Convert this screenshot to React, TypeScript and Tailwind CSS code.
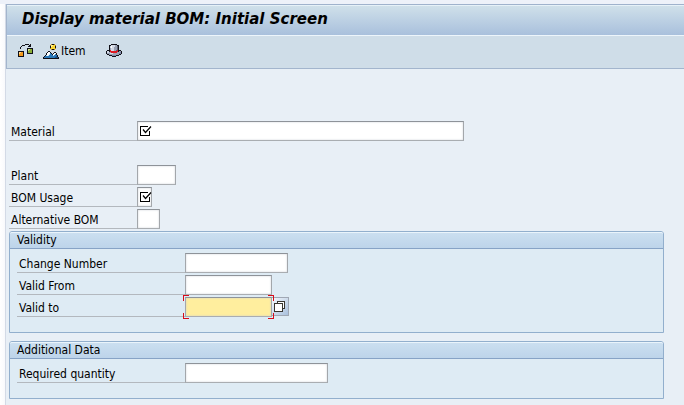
import type { ReactNode } from "react";

const PALETTE: Record<string, string> = {
  k: "#101018",
  o: "#f39a1c",
  O: "#ffd58a",
  g: "#8cae36",
  G: "#d0e08a",
  y: "#fbd834",
  Y: "#fff3a0",
  n: "#b08a20",
  w: "#ffffff",
  b: "#2a78b8",
  B: "#174f8c",
  l: "#c6e2f4",
  r: "#e01820",
  s: "#9aa2b4",
  S: "#d4dae6",
  d: "#5c6274",
  p: "#8088a8",
};

function PixelIcon({ rows }: { rows: string[] }) {
  const width = Math.max(...rows.map((row) => row.length));
  return (
    <svg
      width={width}
      height={rows.length}
      viewBox={`0 0 ${width} ${rows.length}`}
      shapeRendering="crispEdges"
      aria-hidden="true"
      className="shrink-0"
    >
      {rows.flatMap((row, y) =>
        [...row].map((c, x) =>
          c === "." ? null : <rect key={`${x}-${y}`} x={x} y={y} width="1" height="1" fill={PALETTE[c]} />,
        ),
      )}
    </svg>
  );
}

const STRUCTURE = [
  ".......kkkk.k...",
  "....kkk....kk...",
  "...k......kkk...",
  "..k.............",
  "..k......kkkkkk.",
  ".........kGGggk.",
  ".........kGgggk.",
  "kkkkkk...kggggk.",
  "kOOook...kggggk.",
  "kOoook...kkkkkk.",
  "kooook..........",
  "kooook..........",
  "kkkkkk..........",
  "................",
];

const MOUNTAIN = [
  "........nkkn....",
  ".......nYYyyn...",
  ".......kYyyyk...",
  ".......kyyyyk...",
  ".......nyyyyn...",
  "........nkkn....",
  "................",
  ".....kk.........",
  "....kwwk...kk...",
  "...kwwwbk.kwwk..",
  "...kwwlbbkwwbk..",
  "..klwlbbbblbbbk.",
  ".kbbbbbbbbbbbBk.",
  "kbbbbbbbbbbbBBBk",
  "kkkkkkkkkkkkkkkk",
];

const HAT = [
  ".....kkkkkk.....",
  "...kkSSSSsskk...",
  "...kSwSSSssdk...",
  "...kSwSSsssdk...",
  "...ksSSSsssdk...",
  "...ksSSSsssdk...",
  ".kkkrSSSssdrkkk.",
  "kSSkrrrrrrrrkssk",
  "kSSssrrrrrrssspk",
  "ksssSSSssssssppk",
  ".kksssssssssskk.",
  "...kkkppppkkk...",
  "......kkkk......",
  "................",
];

function RequiredMark() {
  return (
    <svg
      width="12"
      height="12"
      viewBox="0 0 12 12"
      fill="none"
      stroke="#000"
      aria-hidden="true"
      className="pointer-events-none absolute top-1 left-[3px]"
    >
      <path d="M8 1.5H.5v9h9V6" shapeRendering="crispEdges" />
      <path d="M3 4.5l2.5 3L11 1.5" strokeWidth="1.2" />
    </svg>
  );
}

type FieldProps = {
  id: string;
  label: string;
  width: string;
  labelWidth?: string;
  required?: boolean;
  focused?: boolean;
  children?: ReactNode;
};

function Field({ id, label, width, labelWidth = "w-32", required, focused, children }: FieldProps) {
  return (
    <div className="flex h-5">
      <label htmlFor={id} className={`${labelWidth} shrink-0 border-b border-[#b3b8be] pl-0.5 leading-[22px]`}>
        {label}
      </label>
      <div className={`relative ${width}`}>
        <input
          id={id}
          type="text"
          required={required}
          className={`block h-5 w-full border border-t-[#8e9399] border-r-[#a3a7ab] border-b-[#a9adb1] border-l-[#a3a7ab] px-1 shadow-[inset_0_0_2px_0px_#c9ccd4] outline-none ${
            focused ? "bg-[#ffee9e]" : "bg-white"
          }`}
        />
        {required && <RequiredMark />}
        {focused && (
          <>
            <span className="absolute -top-0.5 -left-0.5 size-1.5 border-t border-l border-[#d80c18]" />
            <span className="absolute -top-0.5 -right-0.5 z-10 size-1.5 border-t border-r border-[#d80c18]" />
            <span className="absolute -bottom-0.5 -left-0.5 size-1.5 border-b border-l border-[#d80c18]" />
            <span className="absolute -right-0.5 -bottom-0.5 z-10 size-1.5 border-r border-b border-[#d80c18]" />
          </>
        )}
      </div>
      {children}
    </div>
  );
}

function Group({ title, children }: { title: string; children: ReactNode }) {
  return (
    <section className="rounded-t-[3px] border border-[#92afcd] bg-[#deebf4]">
      <h2 className="h-[17px] rounded-t-[2px] border-t border-b border-t-[#eaf4fb] border-b-[#87a3c6] bg-linear-to-b from-[#cbdff0] to-[#bdd4ea] pl-[7px] leading-[15px]">
        {title}
      </h2>
      <div className="flex flex-col gap-0.5 px-[7px] pt-1 pb-[15px]">{children}</div>
    </section>
  );
}

export default function App() {
  return (
    <div className="min-h-screen bg-[#edf1f9] pt-1 font-['DejaVu_Sans_Condensed','DejaVu_Sans',Tahoma,sans-serif] text-[12px] text-black">
      <div className="flex min-h-[calc(100vh-4px)]">
        <div className="w-[5px] shrink-0 bg-linear-to-r from-white to-[#f8f9fc]" />
        <main className="min-w-0 flex-1 border-l border-[#d3dae6] bg-[#e8eff6]">
          <header className="border-t border-b border-l border-t-[#9fb2cc] border-b-[#a3b5cd] border-l-[#a3b5cd]">
            <h1 className="h-[31px] border-t border-b border-t-[#e6f1f8] border-b-[#edf5fb] bg-linear-to-b from-[#cfe0ea] to-[#a9c0dc] pl-[15px] font-['DejaVu_Sans',Verdana,sans-serif] text-[15px] leading-[26px] font-bold italic">
              Display material BOM: Initial Screen
            </h1>
            <div role="toolbar" aria-label="Application toolbar" className="flex h-8 items-center bg-[#cfdde8] pb-0.5 pl-[11px]">
              <button type="button" aria-label="Structure list">
                <PixelIcon rows={STRUCTURE} />
              </button>
              <button type="button" className="ml-[9px] flex items-center gap-0.5">
                <PixelIcon rows={MOUNTAIN} />
                Item
              </button>
              <button type="button" aria-label="Services" className="ml-5">
                <PixelIcon rows={HAT} />
              </button>
            </div>
          </header>

          <form className="pt-13 pr-5 pl-[3px]">
            <Field id="material" label="Material" width="w-[327px]" required />
            <div className="mt-6 flex flex-col gap-0.5">
              <Field id="plant" label="Plant" width="w-[39px]" />
              <Field id="usage" label="BOM Usage" width="w-[15px]" required />
              <Field id="alternative" label="Alternative BOM" width="w-[23px]" />
            </div>
            <div className="mt-0.5 flex flex-col gap-2">
              <Group title="Validity">
                <Field id="change" label="Change Number" width="w-[103px]" labelWidth="w-42" />
                <Field id="from" label="Valid From" width="w-[87px]" labelWidth="w-42" />
                <Field id="to" label="Valid to" width="w-[87px]" labelWidth="w-42" focused>
                  <button
                    type="button"
                    aria-label="Choose date"
                    className="flex h-[19px] w-[17px] items-center justify-center border-t border-r border-b border-[#a0a8b4] bg-linear-to-br from-[#f4f8fc] to-[#a9c0dc]"
                  >
                    <svg width="12" height="12" viewBox="0 0 12 12" fill="#fff" stroke="#38352f" shapeRendering="crispEdges" aria-hidden="true">
                      <rect x="3.5" y=".5" width="7" height="7" />
                      <rect x=".5" y="2.5" width="8" height="8" />
                    </svg>
                  </button>
                </Field>
              </Group>
              <Group title="Additional Data">
                <Field id="quantity" label="Required quantity" width="w-[143px]" labelWidth="w-42" />
              </Group>
            </div>
          </form>
        </main>
      </div>
    </div>
  );
}
